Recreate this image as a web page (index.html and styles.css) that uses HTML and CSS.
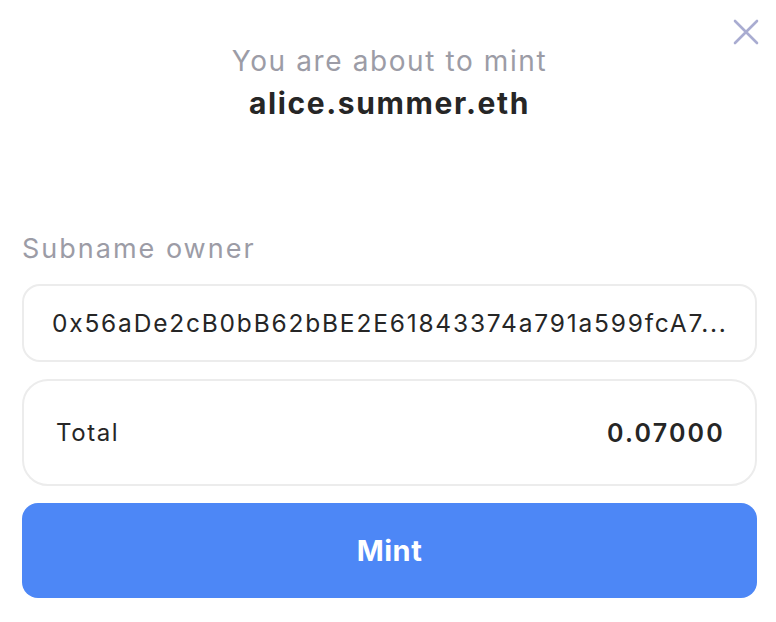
FILE: index.html
```html
<!DOCTYPE html>
<html>
<head>
<meta charset="utf-8">
<link rel="stylesheet" href="styles.css">
</head>
<body>
<div class="modal">
  <button class="close" aria-label="Close">
    <svg width="26" height="26" viewBox="0 0 26 26"><path d="M2 2 L24 24 M24 2 L2 24" stroke="#a9acd1" stroke-width="2.6" stroke-linecap="round"/></svg>
  </button>
  <header class="head">
    <div class="sub">You are about to mint</div>
    <div class="name">alice.summer.eth</div>
  </header>
  <div class="label">Subname owner</div>
  <div class="field">0x56aDe2cB0bB62bBE2E61843374a791a599fcA7...</div>
  <div class="total">
    <span class="total-label">Total</span>
    <span class="amount">0.07000</span>
  </div>
  <button class="mint">Mint</button>
</div>
</body>
</html>
```
FILE: styles.css
```css
* { box-sizing: border-box; }
html, body { margin: 0; background: #fff; }
body { font-family: Inter, "Noto Sans", sans-serif; color: #262626; }
.modal { position: relative; width: 776px; height: 622px; padding: 43px 19px 0 22px; display: flex; flex-direction: column; }
.close { position: absolute; top: 19px; right: 17px; border: 0; background: none; padding: 0; cursor: pointer; line-height: 0; }
.head { text-align: center; display: flex; flex-direction: column; align-items: center; }
.sub { font-size: 28px; color: #9c9ca6; line-height: 36px; letter-spacing: 1.6px; }
.name { font-size: 30px; font-weight: 700; line-height: 40px; margin-top: 4px; letter-spacing: 1.6px; }
.label { margin-top: 108px; font-size: 27px; color: #9c9ca6; line-height: 36px; letter-spacing: 2px; }
.field { margin-top: 17px; height: 78px; border: 2px solid #ececec; border-radius: 18px; display: flex; align-items: center; padding: 0 28px; font-size: 24.5px; white-space: nowrap; overflow: hidden; letter-spacing: 1.8px; }
.total { margin-top: 17px; height: 107px; border: 2px solid #ececec; border-radius: 26px; display: flex; align-items: center; justify-content: space-between; padding: 0 32px; font-size: 24px; }
.total-label { letter-spacing: 1.6px; }
.amount { font-weight: 600; font-size: 25px; letter-spacing: 2.2px; margin-right: -2px; }
.mint { margin-top: 17px; height: 95px; width: 100%; border: 0; border-radius: 16px; background: #4d87f6; color: #fff; font-family: inherit; font-size: 29px; font-weight: 700; cursor: pointer; letter-spacing: 0.5px; }
```
